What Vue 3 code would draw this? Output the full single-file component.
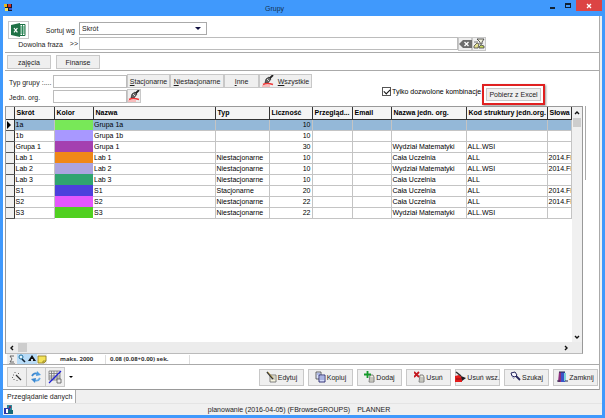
<script setup>
import { h, ref } from 'vue'

const sort = ref('Skrót')
const onlyAllowed = ref(true)

const shapes = {
  app: [['M1 1h8v7H3z', '#181830'], ['M1 1h3v3H1z', '#e8b820'], ['M5 1h3v3H5z', '#d03020'], ['M2 5h3v3H2z', '#f0e060'], ['M6 5h3v2H6z', '#3858d0']],
  excel: [['M0 2L9 0v14L0 12z', '#1e7145'], ['M9 1.5h5v11H9z', '#fff', '#1e7145'], ['M9 4h5M9 6h5M9 8h5M9 10h5M11.5 2v10', 'none', '#2f8a5b'], ['M3 5l3.4 4.4M6.4 5L3 9.4', 'none', '#fff', 1.2]],
  erase: [['M0 5L4 1h9v8H4z', '#6d6d6d'], ['M5.5 3l4 4M9.5 3l-4 4', 'none', '#fff', 1.3]],
  filter: [['M4 1h7L9 4v2H7V4z', '#f4f4e0', '#333', 0.8], ['M1 8l3-3 2 1-1 4H1z', '#e4e090', '#444', 0.8], ['M6 9l2-2 3 1v2H6z', '#c8d860', '#444', 0.8], ['M1 4h4', 'none', '#555', 0.8]],
  brush: [['M11 0L7 4', 'none', '#222', 1.8], ['M7 2L4 4 3 8h3l3-4z', '#666', '#222', 0.7], ['M5 4l2 2', 'none', '#ddd', 1], ['M1 9.5q4-2 10 0', 'none', '#f03838', 1.6], ['M0 11h8', 'none', '#ff8a8a', 1]],
  wand: [['M5 4l5 5', 'none', '#333', 1.3], ['M4 1v1M8 2L7 3M2 4h1M1 7l1-1M3 8v1M6 9v1', 'none', '#666', 1]],
  refresh: [['M2 5q2-4 6-2', 'none', '#3d88d0', 1.8], ['M7 0l4 4-5 1z', '#4c9be0'], ['M10 7q-2 4-6 2', 'none', '#64aae6', 1.8], ['M5 12L1 8l5-1z', '#3d88d0']],
  grid: [['M1 1h11v9H1zM1 3.5h11M1 6h11M1 8h11M3.5 1v9M6 1v9M9 1v9', 'none', '#777', 0.8], ['M9 9h4v4H9z', '#eee', '#555', 0.8], ['M1 13L13 1', 'none', '#2020d8', 1.3]],
  sigma: [['M7 2H3l2 3-2 3h4M2 10h6', 'none', '#555', 0.9]],
  lens: [['M2 3a2 2 0 1 0 4 0a2 2 0 1 0-4 0', '#e4f4ff', '#1d6f9c', 1], ['M5 5l3 3', 'none', '#123', 1.6]],
  up: [['M5 1L9 7H1z', '#111'], ['M4 5h2v3H4z', '#cde']],
  note: [['M1 2h8v5L7 9H1z', '#f4e35a', '#8d7c1c', 0.8], ['M6 9V7h3', 'none', '#8d7c1c', 0.8]],
  edit: [['M4 4h6v7H4z', '#f5f3df', '#666', 0.8], ['M5 6h4M5 8h4', 'none', '#999', 0.7], ['M1 1l6 7', 'none', '#333', 1.6], ['M2 1l5 6', 'none', '#d2b24c', 0.7]],
  copy: [['M1 1h5v7H1z', '#dfe6fa', '#444', 0.8], ['M4 4h6v7H4z', '#d5dcf8', '#25256e', 0.9], ['M5 6h4M5 8h4M2 3h3', 'none', '#5967ba', 0.7]],
  add: [['M6 4h3l1 2v5H5z', '#efefe2', '#666', 0.8], ['M6 7h4M6 9h4', 'none', '#888', 0.8], ['M3.5 0v7M0 3.5h7', 'none', '#15992a', 1.8]],
  del: [['M6 4h3l1 2v5H5z', '#efefe2', '#666', 0.8], ['M6 7h4M6 9h4', 'none', '#888', 0.8], ['M0 1l5 5M5 1L0 6', 'none', '#c4181f', 1.8]],
  wipe: [['M0 5l4-1 3 2v5H0z', '#e21c1c'], ['M1 1l5 4', 'none', '#333', 1.6], ['M6 5l5 2-4 3z', '#1c1c24'], ['M1 8h5', 'none', '#8a0c0c', 1]],
  torch: [['M1 2l4-1 2 3-2 2-3-1z', '#f5f5ff', '#26265c', 1], ['M6 5l4 4', 'none', '#26265c', 1.8], ['M2 5l2 3', 'none', '#7777aa', 0.8]],
  exit: [['M4 1h4v10H4z', '#3a54c8'], ['M2 1h2v10H1z', '#8c2f7e'], ['M7 2h2v8H7z', '#7fd2d8'], ['M2 1h6M0 10h3M8 10h3', 'none', '#26264a', 1]],
  people: [['M4 1h5v5H4z', '#2c8a9c'], ['M1 4h6v6H1z', '#2a37a8'], ['M5 6h5v4H5z', '#176a78'], ['M3 5h2v4H3z', '#fff'], ['M6 2h2v2H6z', '#7c2c56']],
}

function Icon(props) {
  return h('svg', { viewBox: `0 0 ${props.w || 12} ${props.h || 12}`, width: props.w || 12, height: props.h || 12, 'aria-hidden': 'true' },
    shapes[props.name].map(([d, fill, stroke, width]) =>
      h('path', { d, fill, stroke: stroke || 'none', 'stroke-width': width || 1 })))
}
Icon.props = ['name', 'w', 'h']

const columns = [
  { key: 'skrot', label: 'Skrót', cls: 'c-skrot' },
  { key: 'kolor', label: 'Kolor', cls: 'c-kolor' },
  { key: 'nazwa', label: 'Nazwa', cls: 'c-nazwa' },
  { key: 'typ', label: 'Typ', cls: 'c-typ' },
  { key: 'licz', label: 'Liczność', cls: 'c-licz' },
  { key: 'przegl', label: 'Przegląd...', cls: 'c-przegl' },
  { key: 'email', label: 'Email', cls: 'c-email' },
  { key: 'org', label: 'Nazwa jedn. org.', cls: 'c-org' },
  { key: 'kod', label: 'Kod struktury jedn.org.', cls: 'c-kod' },
  { key: 'slowa', label: 'Słowa', cls: 'c-slowa' },
]

const W = 'Wydział Matematyki'
const C = 'Cała Uczelnia'
const N = 'Niestacjonarne'
const rows = [
  { skrot: '1a', kolor: '#78e858', nazwa: 'Grupa 1a', licz: 10 },
  { skrot: '1b', kolor: '#a898ff', nazwa: 'Grupa 1b', licz: 10 },
  { skrot: 'Grupa 1', kolor: '#a440b0', nazwa: 'Grupa 1', licz: 30, org: W, kod: 'ALL.WSI' },
  { skrot: 'Lab 1', kolor: '#f08818', nazwa: 'Lab 1', typ: N, licz: 10, org: C, kod: 'ALL', slowa: '2014.FIZ' },
  { skrot: 'Lab 2', kolor: '#aca4e0', nazwa: 'Lab 2', typ: N, licz: 10, org: W, kod: 'ALL.WSI', slowa: '2014.FIZ' },
  { skrot: 'Lab 3', kolor: '#30a470', nazwa: 'Lab 3', typ: N, licz: 10, org: C, kod: 'ALL' },
  { skrot: 'S1', kolor: '#4c40dc', nazwa: 'S1', typ: 'Stacjonarne', licz: 20, org: C, kod: 'ALL', slowa: '2014.FIZ' },
  { skrot: 'S2', kolor: '#e458fc', nazwa: 'S2', typ: N, licz: 22, org: C, kod: 'ALL', slowa: '2014.FIZ' },
  { skrot: 'S3', kolor: '#50d020', nazwa: 'S3', typ: N, licz: 22, org: W, kod: 'ALL.WSI' },
]

const actions = [
  { icon: 'edit', label: 'Edytuj' },
  { icon: 'copy', label: 'Kopiuj' },
  { icon: 'add', label: 'Dodaj' },
  { icon: 'del', label: 'Usuń' },
  { icon: 'wipe', label: 'Usuń wsz.' },
  { icon: 'torch', label: 'Szukaj' },
  { icon: 'exit', label: 'Zamknij' },
]
</script>

<template>
  <div class="window">
    <header class="titlebar">
      <Icon name="app" :w="10" :h="10" />
      <h1>Grupy</h1>
      <div class="controls">
        <button type="button" aria-label="Minimalizuj"><span class="min"></span></button>
        <button type="button" aria-label="Maksymalizuj"><span class="max"></span></button>
        <button type="button" class="close" aria-label="Zamknij okno">
          <svg viewBox="0 0 6 6" width="6" height="6"><path d="M1 1l4 4M5 1L1 5" stroke="#fff" stroke-width="1.3" /></svg>
        </button>
      </div>
    </header>

    <main class="content">
      <section class="search">
        <div class="line sort">
          <button type="button" class="btn excel" aria-label="Excel"><Icon name="excel" :w="15" :h="14" /></button>
          <label for="sort">Sortuj wg</label>
          <div class="select">
            <select id="sort" v-model="sort"><option>Skrót</option><option>Nazwa</option></select>
            <svg viewBox="0 0 6 3" width="6" height="3"><path d="M0 0h6L3 3z" fill="#101040" /></svg>
          </div>
        </div>
        <div class="line">
          <label for="phrase" class="phrase">Dowolna fraza</label>
          <span class="chevrons">&gt;&gt;</span>
          <input id="phrase" type="text" class="phrase-input">
          <button type="button" class="btn square" aria-label="Wyczyść"><Icon name="erase" :w="13" :h="10" /></button>
          <button type="button" class="btn square" aria-label="Filtruj"><Icon name="filter" /></button>
        </div>
      </section>

      <nav class="modes">
        <button type="button" class="btn">zajęcia</button>
        <button type="button" class="btn">Finanse</button>
      </nav>

      <section class="filters">
        <div class="fields">
          <div class="line">
            <label for="type">Typ grupy :....</label>
            <input id="type" type="text">
            <button type="button" class="btn t1"><span><u>S</u>tacjonarne</span></button>
            <button type="button" class="btn t2"><span><u>N</u>iestacjonarne</span></button>
            <button type="button" class="btn t3"><span><u>I</u>nne</span></button>
            <button type="button" class="btn t4"><Icon name="brush" /><span><u>W</u>szystkie</span></button>
          </div>
          <div class="line">
            <label for="unit">Jedn. org.</label>
            <input id="unit" type="text">
            <button type="button" class="btn square" aria-label="Wyczyść jednostkę"><Icon name="brush" /></button>
          </div>
        </div>
        <label class="check">
          <input v-model="onlyAllowed" type="checkbox">
          <span>Tylko dozwolone kombinacje</span>
        </label>
        <div class="highlight"><button type="button" class="btn">Pobierz z Excel</button></div>
      </section>

      <section class="data">
        <div class="grid">
          <div class="viewport">
            <table>
              <colgroup>
                <col class="c-mark">
                <col v-for="c in columns" :key="c.key" :class="c.cls">
              </colgroup>
              <thead>
                <tr><th></th><th v-for="c in columns" :key="c.key" scope="col">{{ c.label }}</th></tr>
              </thead>
              <tbody>
                <tr v-for="(r, i) in rows" :key="r.skrot" :class="{ selected: i === 0 }">
                  <td class="mark"><svg v-if="i === 0" viewBox="0 0 4 8" width="4" height="8"><path d="M0 0l4 4-4 4z" fill="#000" /></svg></td>
                  <template v-for="c in columns" :key="c.key">
                    <td v-if="c.key === 'kolor'" class="swatch" :style="{ background: r.kolor }"></td>
                    <td v-else :class="{ num: c.key === 'licz' }">{{ r[c.key] }}</td>
                  </template>
                </tr>
              </tbody>
            </table>
          </div>
          <div class="vbar">
            <svg viewBox="0 0 6 4" width="6" height="4"><path d="M1 3l2-2 2 2" fill="none" stroke="#111" stroke-width="1.4" /></svg>
            <span class="vthumb"></span>
            <svg viewBox="0 0 6 4" width="6" height="4"><path d="M1 1l2 2 2-2" fill="none" stroke="#111" stroke-width="1.4" /></svg>
          </div>
          <div class="hbar">
            <svg viewBox="0 0 4 6" width="4" height="6"><path d="M3 1L1 3l2 2" fill="none" stroke="#111" stroke-width="1.4" /></svg>
            <span class="hthumb"></span>
            <svg viewBox="0 0 4 6" width="4" height="6"><path d="M1 1l2 2-2 2" fill="none" stroke="#111" stroke-width="1.4" /></svg>
          </div>
        </div>
        <div class="side"></div>
      </section>

      <section class="stats">
        <button type="button" aria-label="Suma"><Icon name="sigma" :w="10" :h="10" /></button>
        <button type="button" class="on" aria-label="Szukanie"><Icon name="lens" :w="10" :h="10" /></button>
        <button type="button" class="on" aria-label="Do góry"><Icon name="up" :w="10" :h="10" /></button>
        <button type="button" aria-label="Notatka"><Icon name="note" :w="10" :h="10" /></button>
        <span class="limit">maks. 2000</span>
        <span class="time">0.08 (0.08+0.00) sek.</span>
      </section>

      <section class="actions">
        <button type="button" class="btn tool" aria-label="Kreator"><Icon name="wand" /></button>
        <button type="button" class="btn tool" aria-label="Odśwież"><Icon name="refresh" /></button>
        <button type="button" class="btn tool" aria-label="Siatka"><Icon name="grid" :w="14" :h="14" /></button>
        <svg class="more" viewBox="0 0 4 2" width="4" height="2"><path d="M0 0h4L2 2z" fill="#000" /></svg>
        <div class="buttons">
          <button v-for="a in actions" :key="a.label" type="button" class="btn"><Icon :name="a.icon" :w="11" /><span>{{ a.label }}</span></button>
        </div>
      </section>
    </main>

    <div class="tabs"><a href="#browse">Przeglądanie danych</a></div>
    <footer class="status">
      <Icon name="people" :w="11" :h="11" />
      <p><span>planowanie (2016-04-05) (FBrowseGROUPS)</span><span>PLANNER</span></p>
    </footer>
  </div>
</template>

<style>
body { background: #4099fc; }
</style>

<style scoped>
* { box-sizing: border-box; margin: 0; }
svg { display: block; flex: none; }
.window {
  display: flex; flex-direction: column; height: 100vh; padding: 0 3px 3px;
  background: #4099fc; color: #1c1c1c; overflow: hidden;
  font: 7px/9px "Liberation Sans", sans-serif;
}
button, input, select { font: inherit; color: inherit; padding: 0; border-radius: 0; }
.titlebar { display: flex; align-items: center; height: 16px; flex: none; }
.titlebar h1 { flex: 1; text-align: center; font-size: 7px; font-weight: 400; color: #12304f; padding-right: 8px; }
.controls { display: flex; align-self: flex-start; }
.controls button { display: flex; align-items: center; justify-content: center; width: 16px; height: 11px; border: 0; background: none; }
.controls .close { width: 26px; background: #dc4444; }
.min { width: 5px; height: 2px; margin-top: 4px; background: #123; }
.max { width: 6px; height: 5px; border: 1px solid #123; border-top-width: 2px; }

.content { flex: 1; min-height: 0; display: flex; flex-direction: column; margin-right: 2px; background: #fff; border-right: 1px solid #aaa; box-shadow: 2px 0 #f0f0f0; }
.btn {
  display: flex; align-items: center; justify-content: center; flex: none; white-space: nowrap;
  background: #efefef; border: 1px solid #c8c8c8;
}
.line { display: flex; align-items: center; }
input[type="text"] { border: 1px solid #bcbcbc; background: #fff; height: 13px; min-width: 0; }

.search { padding: 5px 0 1px 4px; border-bottom: 1px solid #aaa; margin-left: 2px; }
.search .line { height: 15px; }
.excel { width: 21px; height: 18px; align-self: flex-start; margin-left: -1px; background: #fff; }
.sort label { width: 46px; text-align: right; padding-top: 4px; }
.select { position: relative; width: 128px; height: 13px; margin-left: 4px; }
.select select { appearance: none; width: 100%; height: 100%; border: 1px solid #aaa; background: #fff; padding-left: 2px; display: block; }
.select svg { position: absolute; right: 6px; top: 5px; }
.phrase { width: 54px; text-align: right; padding-top: 2px; }
.chevrons { width: 16px; padding-right: 1px; text-align: right; }
.phrase-input { width: 379px; }
.square { width: 14px; height: 14px; }

.modes { display: flex; gap: 5px; padding: 2px 0 1px 2px; margin-left: 2px; border-bottom: 1px solid #aaa; }
.modes .btn { width: 44px; height: 14px; }

.filters { display: flex; align-items: flex-start; padding: 3px 0 1px 6px; }
.fields { display: flex; flex-direction: column; gap: 1px; }
.fields label { width: 44px; padding-top: 3px; white-space: nowrap; }
.fields input { width: 74px; }
.fields .btn { height: 14px; }
.t1 { width: 43px; }
.t2 { width: 54px; }
.t3 { width: 35px; }
.t4 { width: 53px; gap: 4px; }
.check { display: flex; align-items: center; gap: 1px; width: 100px; margin: 13px 0 0 70px; white-space: nowrap; color: #000; }
.check input { appearance: none; flex: none; display: grid; place-items: center; width: 9px; height: 9px; border: 1px solid #555; background: #fff; margin: 0; }
.check input:checked::before { content: ""; width: 5px; height: 3px; border: solid #111; border-width: 0 0 1px 1px; transform: rotate(-45deg); margin-bottom: 1px; }
.highlight { margin-top: 10px; padding: 2px; border: 2px solid #e02020; box-shadow: 1px 1px 2px #999; }
.highlight .btn { width: 55px; height: 13px; }

.data { flex: 1; min-height: 0; display: flex; gap: 2px; padding: 0 13px 0 2px; }
.grid { flex: 1; min-width: 0; display: grid; grid-template: minmax(0, 1fr) 11px / minmax(0, 1fr) 10px; border: 1px solid #999; border-bottom-color: #bbb; }
.side { width: 1px; height: 74px; background: #aaa; }
.viewport { overflow: hidden; }
table { width: 100%; table-layout: fixed; border-collapse: collapse; font: inherit; color: #000; }
th { height: 12px; padding: 0 0 0 2px; text-align: left; background: #f4f4f4; border-right: 1px solid #333; border-bottom: 1px solid #333; white-space: nowrap; overflow: hidden; }
td { height: 11px; padding: 0 1px; border-right: 1px solid #c4c4c4; border-bottom: 1px solid #c4c4c4; white-space: nowrap; overflow: hidden; }
.mark { background: #f0f0f0; border-right-color: #333; border-bottom-color: #555; }
.swatch { border-bottom: 0; border-right: 0; }
.num { text-align: right; }
.selected td:not(.mark):not(.swatch) { background: #94b8d8; }
.c-mark { width: 8px; } .c-skrot { width: 40px; } .c-kolor { width: 39px; } .c-nazwa { width: 122px; }
.c-typ { width: 54px; } .c-licz { width: 43px; } .c-przegl { width: 40px; } .c-email { width: 39px; }
.c-org { width: 75px; } .c-kod { width: 81px; }
.vbar { display: flex; flex-direction: column; align-items: center; background: #f0f0f0; padding: 4px 0 3px; }
.vthumb { width: 8px; height: 9px; margin: 3px 0 auto; background: #cdcdcd; }
.hbar { grid-column: 1 / 3; display: flex; align-items: center; background: #ececec; padding: 0 14px 0 4px; }
.hthumb { width: 9px; height: 9px; margin: 0 auto 0 4px; background: #cdcdcd; }

.stats { display: flex; align-items: center; height: 11px; flex: none; padding-left: 4px; border-bottom: 1px solid #aaa; font: 700 6px/9px "Open Sans", sans-serif; color: #333; }
.stats button { width: 10px; height: 10px; border: 0; background: #eee; display: flex; }
.stats .on { background: #b8dcf8; }
.limit { margin-left: 13px; width: 46px; border-right: 1px solid #ddd; }
.time { padding: 0 20px 0 4px; border-right: 1px solid #ddd; }

.actions { display: flex; align-items: center; height: 25px; flex: none; padding: 0 1px 0 4px; border-bottom: 1px solid #999; }
.tool { width: 20px; height: 20px; margin-right: -1px; }
.tool + .more { margin-left: 5px; }
.buttons { display: flex; gap: 4px; margin-left: auto; }
.buttons .btn { width: 45px; height: 17px; gap: 1px; }

.tabs { display: flex; flex: none; height: 14px; background: #f0f0f0; border-bottom: 1px solid #e4e4e4; }
.tabs a { display: flex; align-items: center; padding: 0 3px 0 4px; background: #fff; border-right: 1px solid #aaa; color: inherit; text-decoration: none; }
.status { display: flex; align-items: center; flex: none; height: 11px; background: #f0f0f0; }
.status p { flex: 1; display: flex; justify-content: center; gap: 7px; padding-right: 18px; }
</style>
